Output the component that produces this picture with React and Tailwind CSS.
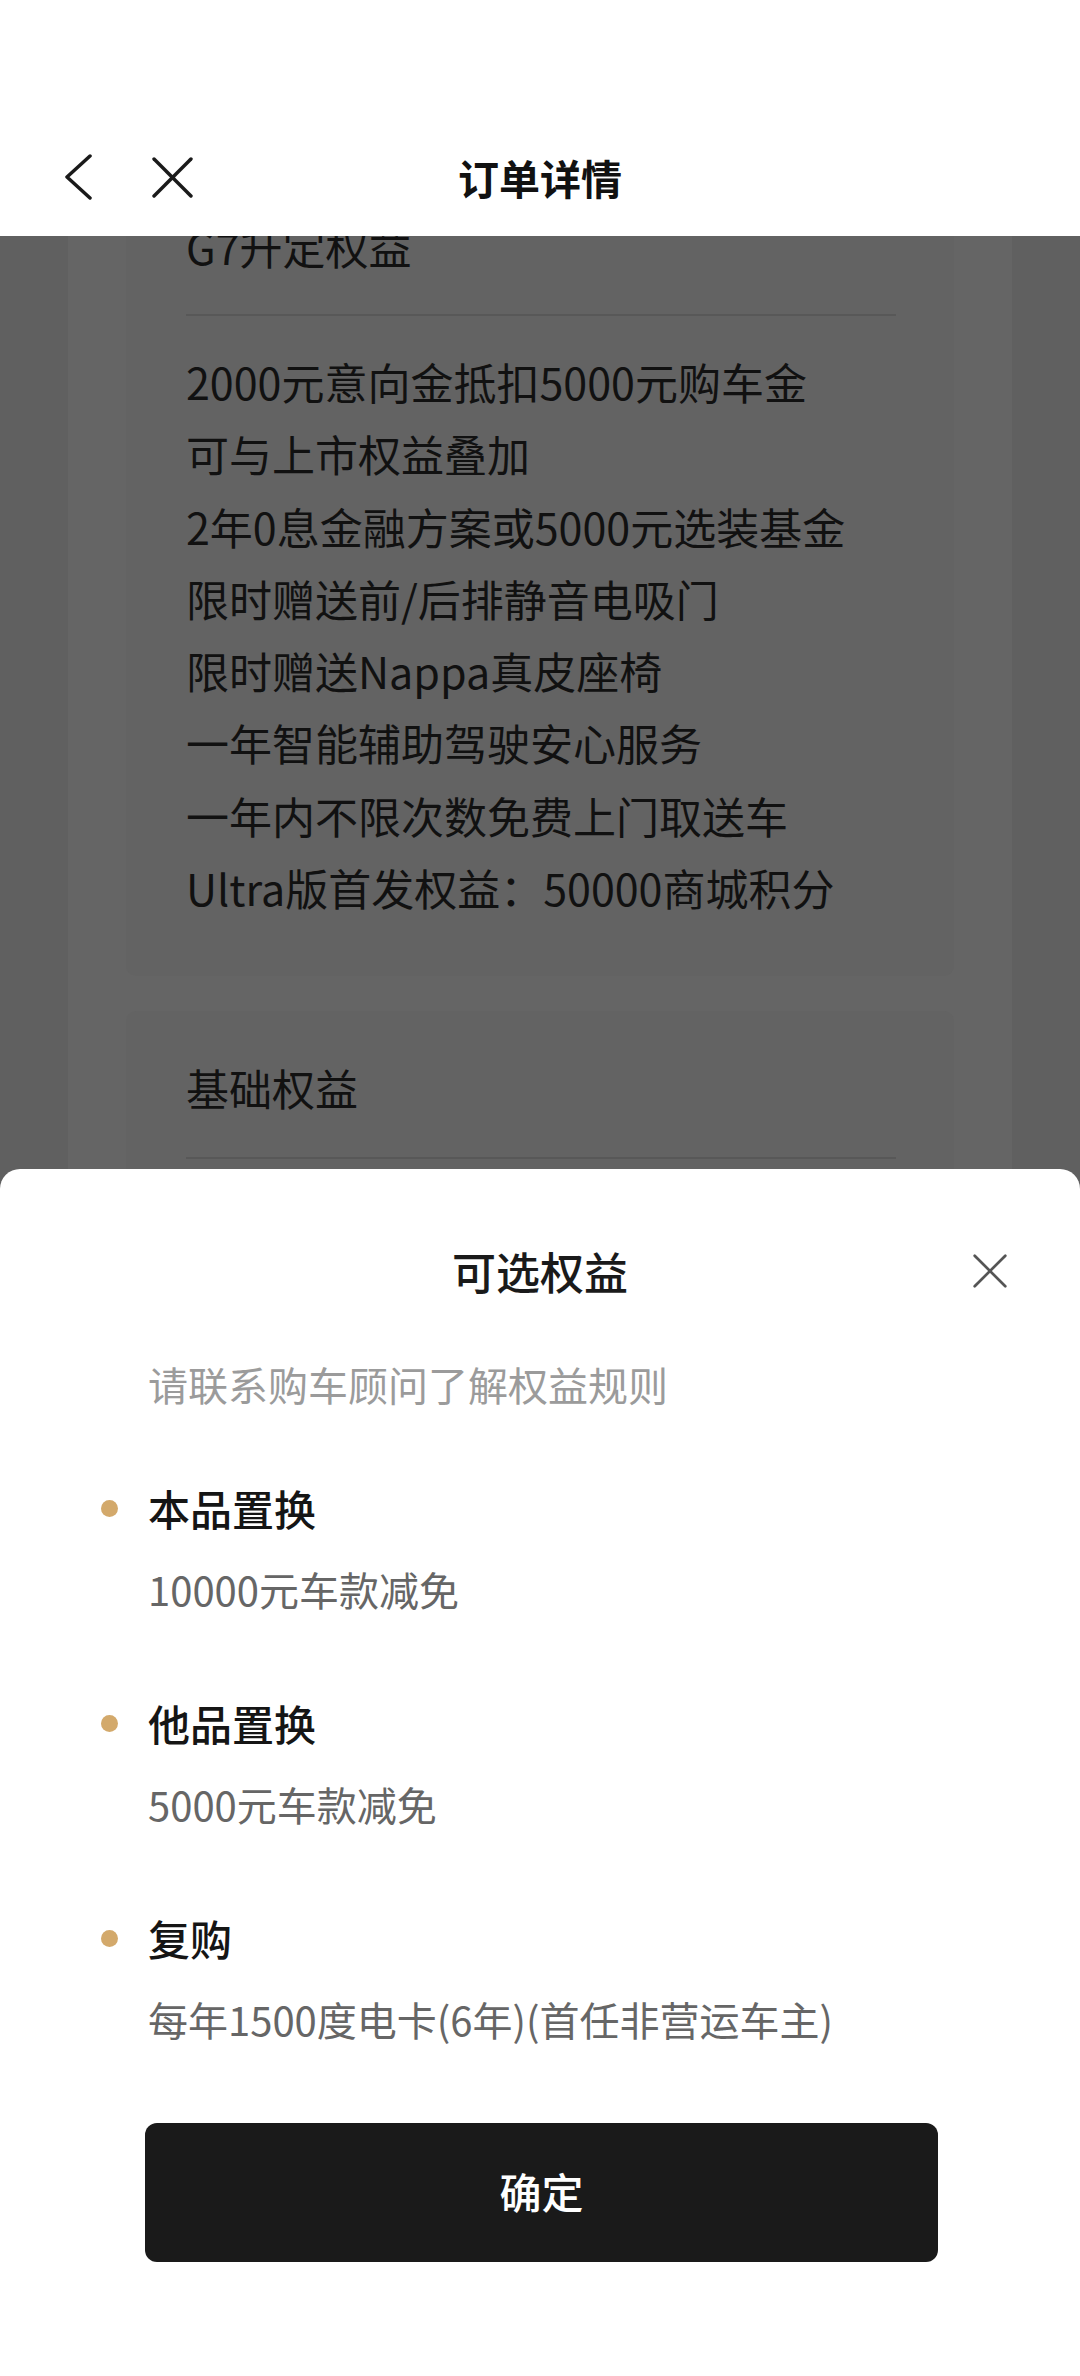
import React from 'react';

const font = { fontFamily: '"Noto Sans CJK SC", "Noto Sans", sans-serif' };

const quanyi = [
  '2000元意向金抵扣5000元购车金',
  '可与上市权益叠加',
  '2年0息金融方案或5000元选装基金',
  '限时赠送前/后排静音电吸门',
  '限时赠送Nappa真皮座椅',
  '一年智能辅助驾驶安心服务',
  '一年内不限次数免费上门取送车',
  'Ultra版首发权益：50000商城积分',
];

const kexuan = [
  { title: '本品置换', desc: '10000元车款减免' },
  { title: '他品置换', desc: '5000元车款减免' },
  { title: '复购', desc: '每年1500度电卡(6年)(首任非营运车主)' },
];

const BackIcon = () => (
  <svg width="28" height="46" viewBox="0 0 28 46" fill="none">
    <polyline points="26,2 3,23 26,44" stroke="#1a1a1a" strokeWidth="3.5" strokeLinecap="round" strokeLinejoin="round" />
  </svg>
);

const CloseIcon = ({ size, color, stroke }) => (
  <svg width={size} height={size} viewBox="0 0 40 40" fill="none">
    <line x1="2" y1="2" x2="38" y2="38" stroke={color} strokeWidth={stroke} strokeLinecap="round" />
    <line x1="38" y1="2" x2="2" y2="38" stroke={color} strokeWidth={stroke} strokeLinecap="round" />
  </svg>
);

const App = () => {
  return (
    <div className="relative w-[1080px] h-[2376px] overflow-hidden bg-[#606060]" style={font}>
      {/* 顶部导航 */}
      <div className="relative z-10 h-[236px] bg-white pt-[137px]">
        <div className="grid grid-cols-[1fr_auto_1fr] items-center h-[80px]">
          <div className="flex items-center pl-[64px] gap-[60px]">
            <BackIcon />
            <CloseIcon size={41} color="#1a1a1a" stroke={3.4} />
          </div>
          <h1 className="text-[41px] leading-[60px] font-bold text-[#111]">订单详情</h1>
          <div />
        </div>
      </div>

      {/* 背后页面内容（被遮罩） */}
      <div className="h-[2140px] overflow-hidden">
        <div className="-mt-[66px] mx-[68px] bg-[#656565] px-[58px] pb-[400px]">
          <div className="rounded-[10px] bg-[#636363] pt-[40px] pb-[53px]">
            <p className="px-[60px] text-[43px] leading-[72px] text-[#111]">G7升定权益</p>
            <div className="mt-[32px] ml-[60px] mr-[58px] h-[2px] bg-[#585858]" />
            <ul className="pt-[29px] px-[60px]">
              {quanyi.map((q) => (
                <li key={q} className="text-[43px] leading-[72.3px] text-[#111] whitespace-nowrap">{q}</li>
              ))}
            </ul>
          </div>
          <div className="mt-[35px] rounded-[10px] bg-[#636363] pt-[40px] pb-[200px]">
            <p className="px-[60px] text-[43px] leading-[72px] text-[#111]">基础权益</p>
            <div className="mt-[34px] ml-[60px] mr-[58px] h-[2px] bg-[#585858]" />
          </div>
        </div>
      </div>

      {/* 可选权益 底部弹层 */}
      <div className="absolute left-0 right-0 top-[1169px] bottom-0 z-20 bg-white rounded-t-[20px]">
        <div className="grid grid-cols-[1fr_auto_1fr] items-center pt-[72px] h-[132px]">
          <div />
          <h2 className="text-[44px] leading-[60px] font-medium text-[#1a1a1a]">可选权益</h2>
          <div className="flex justify-end pr-[73px]">
            <CloseIcon size={34} color="#555" stroke={3.2} />
          </div>
        </div>
        <p className="mt-[53px] pl-[148px] text-[40px] leading-[60px] text-[#9b9b9b]">请联系购车顾问了解权益规则</p>

        <div className="mt-[64px] flex flex-col gap-[74px]">
          {kexuan.map((k) => (
            <div key={k.title}>
              <div className="flex items-center pl-[101px] gap-[30px]">
                <span className="w-[17px] h-[17px] rounded-full bg-[#d3a96b]" />
                <span className="text-[42px] leading-[60px] font-medium text-[#151515]">{k.title}</span>
              </div>
              <p className="mt-[21px] pl-[148px] text-[40px] leading-[60px] text-[#666]">{k.desc}</p>
            </div>
          ))}
        </div>

        <div className="mt-[74px] pl-[145px]">
          <button className="w-[793px] h-[139px] pb-[4px] rounded-[12px] bg-[#1a1a1a] text-white text-[42px] font-medium flex items-center justify-center">
            确定
          </button>
        </div>
      </div>
    </div>
  );
};

export default App;
